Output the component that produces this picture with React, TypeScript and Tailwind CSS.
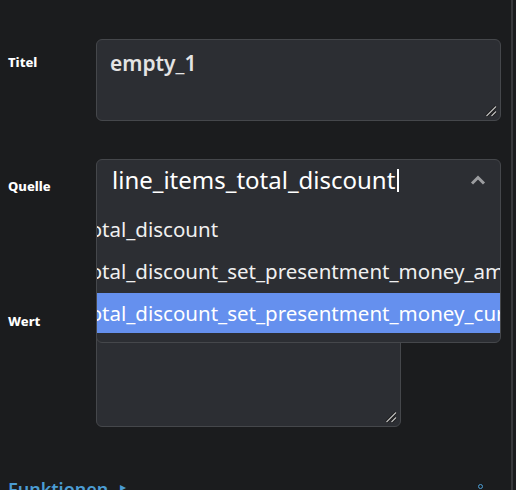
import React from "react";

const font = { fontFamily: "'Noto Sans', 'Open Sans', sans-serif" };

function Grip() {
  return (
    <svg className="absolute right-[3px] bottom-[3px]" width="12" height="12" viewBox="0 0 12 12">
      <path d="M1.5 11 L11 1.5" stroke="#111" strokeWidth="3" />
      <path d="M6.5 11 L11 6.5" stroke="#111" strokeWidth="3" />
      <path d="M1.5 11 L11 1.5" stroke="#b8b8b8" strokeWidth="1.4" />
      <path d="M6.5 11 L11 6.5" stroke="#b8b8b8" strokeWidth="1.4" />
    </svg>
  );
}

const options = [
  "line_items_total_discount",
  "line_items_total_discount_set_presentment_money_amount",
  "line_items_total_discount_set_presentment_money_currency_code",
];

export default function App() {
  return (
    <div className="w-[516px] h-[490px] overflow-hidden bg-[#1b1c1e]" style={font}>
      <div className="w-[513px] h-full border-r-2 border-[#38393c] flex flex-col">
        {/* Titel */}
        <div className="flex mt-[39px]">
          <div className="w-[96px] pl-2 pt-[14px] text-[13px] font-extrabold text-white">Titel</div>
          <div className="relative w-[405px] h-[82px] rounded-[6px] border border-[#45474b] bg-[#2c2e33] px-[13px] pt-[8px]">
            <span className="text-[21px] font-semibold text-[#e4e4e4]">empty_1</span>
            <Grip />
          </div>
        </div>

        {/* Quelle */}
        <div className="flex mt-[38px]">
          <div className="w-[96px] pl-2 pt-[18px] text-[13px] font-extrabold text-white">Quelle</div>
          <div className="relative w-[405px] h-[41px]">
            <div className="absolute left-0 top-0 w-[405px] h-[184px] z-10 rounded-[6px] border border-[#45474b] bg-[#2c2e33] overflow-hidden">
              <div className="flex items-center h-[40px] pl-[15px] pr-[14px]">
                <span className="text-[24px] text-white leading-none">line_items_total_discount</span>
                <span className="ml-[2px] w-[2px] h-[23px] bg-white" />
                <svg className="ml-auto" width="16" height="10" viewBox="0 0 16 10">
                  <path d="M2 8.5 L8 2.5 L14 8.5" fill="none" stroke="#9c9da0" strokeWidth="3" />
                </svg>
              </div>
              <div className="flex flex-col gap-[2px] mt-[9px]">
                {options.map((o, i) => (
                  <div
                    key={o}
                    className={
                      "h-[40px] flex items-center whitespace-nowrap text-[20.5px] " +
                      (i === 2 ? "bg-[#6590ee] text-white" : "text-[#f0f0f0]")
                    }
                  >
                    <span className="ml-[-121px]">{o}</span>
                  </div>
                ))}
              </div>
            </div>
          </div>
        </div>

        {/* Wert */}
        <div className="flex mt-[98px]">
          <div className="w-[96px] pl-2 pt-[14px] text-[13px] font-extrabold text-white">Wert</div>
          <div className="relative w-[305px] h-[129px] rounded-[6px] border border-[#45474b] bg-[#2c2e33]">
            <Grip />
          </div>
        </div>

        {/* Funktionen */}
        <div className="flex items-start mt-[53px] pl-2 pr-[28px]">
          <span className="text-[18px] font-semibold text-[#4b9cd3] leading-none">Funktionen</span>
          <span className="ml-[12px] mt-[1px] text-[12px] leading-none text-[#4b9cd3]">▸</span>
          <span className="ml-auto mt-[4px] w-[5px] h-[5px] rounded-full border border-[#4b9cd3]" />
        </div>
      </div>
    </div>
  );
}
